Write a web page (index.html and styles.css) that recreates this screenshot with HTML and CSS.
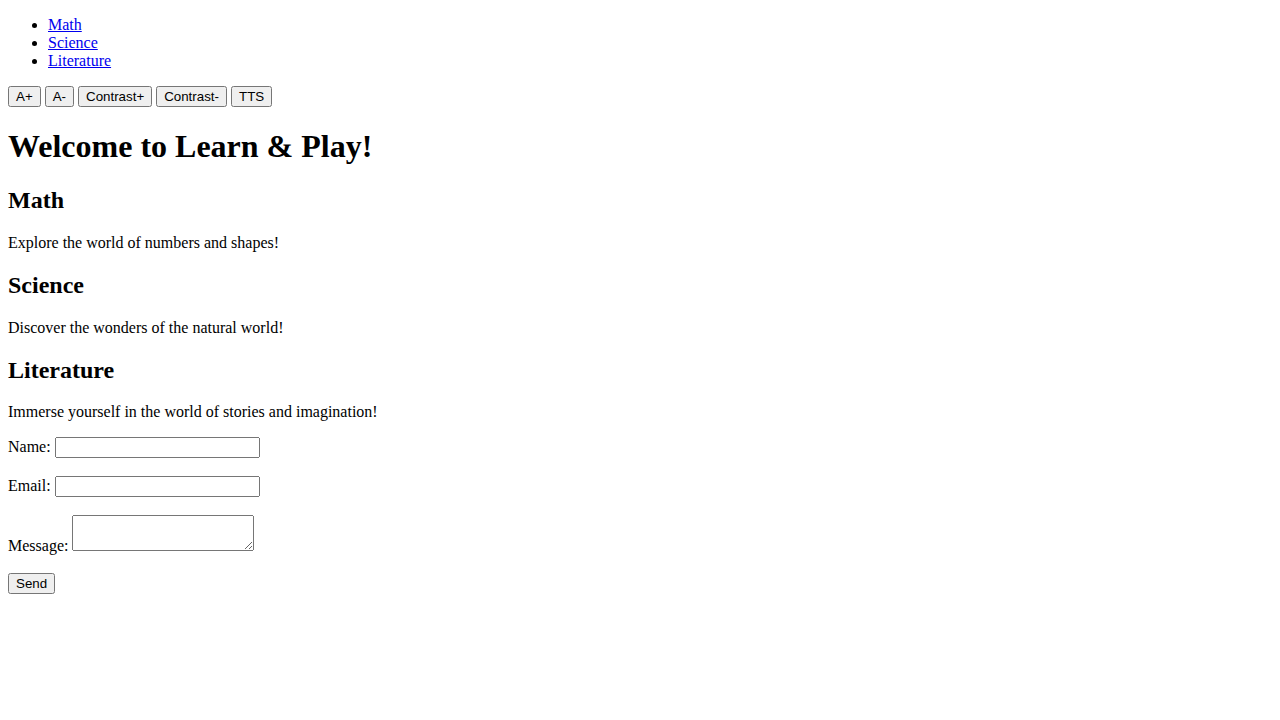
FILE: index.html
```html
<!DOCTYPE html>
<html lang="en">
<head>
<meta charset="UTF-8">
<meta name="viewport" content="width=device-width, initial-scale=1.0">
<title>Learn &amp; Play</title>
<link rel="stylesheet" href="styles.css">
</head>
<body class="page">
<nav>
  <ul class="nav-list">
    <li><a href="#math">Math</a></li>
    <li><a href="#science">Science</a></li>
    <li><a href="#literature">Literature</a></li>
  </ul>
</nav>
<div class="toolbar">
  <button type="button">A+</button>
  <button type="button">A-</button>
  <button type="button">Contrast+</button>
  <button type="button">Contrast-</button>
  <button type="button">TTS</button>
</div>
<main>
  <h1>Welcome to Learn &amp; Play!</h1>
  <section id="math">
    <h2>Math</h2>
    <p>Explore the world of numbers and shapes!</p>
  </section>
  <section id="science">
    <h2>Science</h2>
    <p>Discover the wonders of the natural world!</p>
  </section>
  <section id="literature">
    <h2>Literature</h2>
    <p>Immerse yourself in the world of stories and imagination!</p>
  </section>
</main>
<form class="contact">
  <label for="name">Name:</label>
  <input class="text-field" type="text" id="name" name="name"><br><br>
  <label for="email">Email:</label>
  <input class="text-field" type="email" id="email" name="email"><br><br>
  <label for="message">Message:</label>
  <textarea id="message" name="message"></textarea><br><br>
  <button type="submit">Send</button>
</form>
</body>
</html>
```

FILE: styles.css
```css
.page {
  margin: 0;
  padding: 16px 8px;
  font-family: "Liberation Serif", "Times New Roman", serif;
  font-size: 16px;
  color: #000;
  background: #fff;
}

.nav-list {
  margin: 0 0 16px;
  padding-left: 40px;
}

.text-field {
  box-sizing: border-box;
  width: 205px;
}
```
